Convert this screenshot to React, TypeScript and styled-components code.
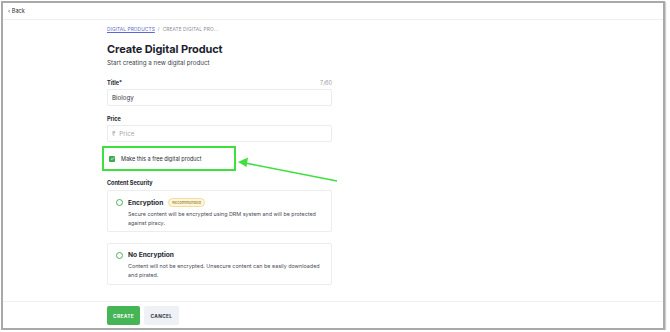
import styled, { createGlobalStyle } from "styled-components";

const Global = createGlobalStyle`
  html, body {
    margin: 0;
    padding: 0;
    background: #ffffff;
    font-family: Inter, "Noto Sans", sans-serif;
    color: #1f2233;
  }
`;

const Frame = styled.div`
  position: relative;
  box-sizing: border-box;
  margin: 1px 0 0 1px;
  width: 664px;
  height: 329px;
  border: 2px solid #a9a9a9;
  box-shadow: 1px 1px 1px #d0d0d0;
  background: #ffffff;
  display: flex;
  flex-direction: column;
`;

const TopBar = styled.div`
  height: 16px;
  border-bottom: 1px solid #efeff2;
  display: flex;
  align-items: center;
  padding-left: 5px;
  font-size: 5.6px;
  color: #333;
`;

const Main = styled.div`
  flex: 1;
  padding-left: 104px;
  padding-top: 6px;
`;

const Column = styled.div`
  width: 225px;
  display: flex;
  flex-direction: column;
`;

const Crumbs = styled.div`
  font-size: 4.8px;
  color: #8a8a95;
  letter-spacing: 0.1px;
  a {
    color: #5b6ad0;
    text-decoration: underline;
  }
  span {
    margin: 0 3px;
  }
`;

const Heading = styled.h1`
  margin: 10px 0 0;
  font-size: 11px;
  font-weight: 700;
  letter-spacing: -0.1px;
  color: #1c1f30;
`;

const Sub = styled.div`
  margin-top: 3px;
  font-size: 6.2px;
  color: #3a3d4c;
`;

const LabelRow = styled.div<{ $top: number }>`
  margin-top: ${(p) => p.$top}px;
  display: flex;
  justify-content: space-between;
  font-size: 5.5px;
  font-weight: 700;
  color: #22252f;
  em {
    font-style: normal;
    font-weight: 400;
    color: #9a9aa2;
  }
`;

const Input = styled.div<{ $muted?: boolean }>`
  margin-top: 3px;
  box-sizing: border-box;
  height: 17px;
  border: 1px solid #ebebf0;
  border-radius: 2px;
  display: flex;
  align-items: center;
  gap: 4px;
  padding-left: 4px;
  font-size: 6.2px;
  color: ${(p) => (p.$muted ? "#a5a5ae" : "#30333f")};
`;

const CheckRow = styled.div`
  margin: 4px 0 0 -5px;
  box-sizing: border-box;
  width: 134px;
  height: 25px;
  border: 2px solid #3ee03e;
  display: flex;
  align-items: center;
  gap: 6px;
  padding-left: 5px;
  font-size: 5.5px;
  color: #2a2d38;
`;

const Box = styled.div`
  width: 6px;
  height: 6px;
  border-radius: 1px;
  background: #3daa52;
  display: flex;
  align-items: center;
  justify-content: center;
`;

const Section = styled.div`
  margin-top: 9px;
  font-size: 5.5px;
  font-weight: 700;
  color: #22252f;
`;

const Card = styled.div<{ $top: number }>`
  margin-top: ${(p) => p.$top}px;
  box-sizing: border-box;
  border: 1px solid #ededf1;
  border-radius: 2px;
  height: 42px;
  padding: 7px 8px 0 8px;
  display: flex;
  gap: 5px;
`;

const Radio = styled.div`
  margin-top: 1px;
  width: 5px;
  height: 5px;
  border: 1.3px solid #4cb05e;
  border-radius: 50%;
  flex-shrink: 0;
`;

const CardBody = styled.div`
  display: flex;
  flex-direction: column;
`;

const CardTitle = styled.div`
  display: flex;
  align-items: center;
  gap: 5px;
  font-size: 6.6px;
  font-weight: 700;
  color: #26282f;
`;

const Badge = styled.span`
  font-size: 4px;
  font-weight: 500;
  color: #a0823a;
  background: #fdf5dc;
  border: 1px solid #f3dc9a;
  border-radius: 5px;
  padding: 1px 3px;
`;

const CardText = styled.div`
  margin-top: 3px;
  font-size: 5.4px;
  line-height: 8.5px;
  white-space: nowrap;
  color: #4a4d5a;
`;

const Footer = styled.div`
  height: 22px;
  border-top: 1px solid #f0f0f3;
  padding: 4px 0 0 104px;
  display: flex;
  gap: 4px;
`;

const Button = styled.div<{ $primary?: boolean }>`
  height: 19px;
  box-sizing: border-box;
  padding: 0 ${(p) => (p.$primary ? 6 : 6.5)}px;
  border-radius: 2px;
  display: flex;
  align-items: center;
  font-size: 4.8px;
  font-weight: 700;
  letter-spacing: 0.35px;
  color: ${(p) => (p.$primary ? "#ffffff" : "#2e3142")};
  background: ${(p) => (p.$primary ? "#45b555" : "#eef1f6")};
`;

const Arrow = styled.svg`
  position: absolute;
  left: 230px;
  top: 147px;
  overflow: visible;
`;

export default function App() {
  return (
    <>
      <Global />
      <Frame>
        <TopBar>‹ Back</TopBar>
        <Main>
          <Column>
            <Crumbs>
              <a>DIGITAL PRODUCTS</a>
              <span>/</span>CREATE DIGITAL PRO...
            </Crumbs>
            <Heading>Create Digital Product</Heading>
            <Sub>Start creating a new digital product</Sub>
            <LabelRow $top={14}>
              Title*<em>7/60</em>
            </LabelRow>
            <Input>Biology</Input>
            <LabelRow $top={10}>Price</LabelRow>
            <Input $muted>
              <span>₹</span>Price
            </Input>
            <CheckRow>
              <Box>
                <svg width="5" height="5" viewBox="0 0 10 10">
                  <path d="M2 5.2 L4.2 7.3 L8 3" fill="none" stroke="#fff" strokeWidth="1.6" />
                </svg>
              </Box>
              Make this a free digital product
            </CheckRow>
            <Section>Content Security</Section>
            <Card $top={4}>
              <Radio />
              <CardBody>
                <CardTitle>
                  Encryption<Badge>Recommended</Badge>
                </CardTitle>
                <CardText>
                  Secure content will be encrypted using DRM system and will be protected
                  <br />
                  against piracy.
                </CardText>
              </CardBody>
            </Card>
            <Card $top={11}>
              <Radio />
              <CardBody>
                <CardTitle>No Encryption</CardTitle>
                <CardText>
                  Content will not be encrypted. Unsecure content can be easily downloaded
                  <br />
                  and pirated.
                </CardText>
              </CardBody>
            </Card>
          </Column>
        </Main>
        <Footer>
          <Button $primary>CREATE</Button>
          <Button>CANCEL</Button>
        </Footer>
        <Arrow width="110" height="40">
          <line x1="104" y1="31" x2="12" y2="13" stroke="#3ee03e" strokeWidth="1.6" />
          <polygon points="5,12 15,7.5 13.5,17" fill="#3ee03e" />
        </Arrow>
      </Frame>
    </>
  );
}
